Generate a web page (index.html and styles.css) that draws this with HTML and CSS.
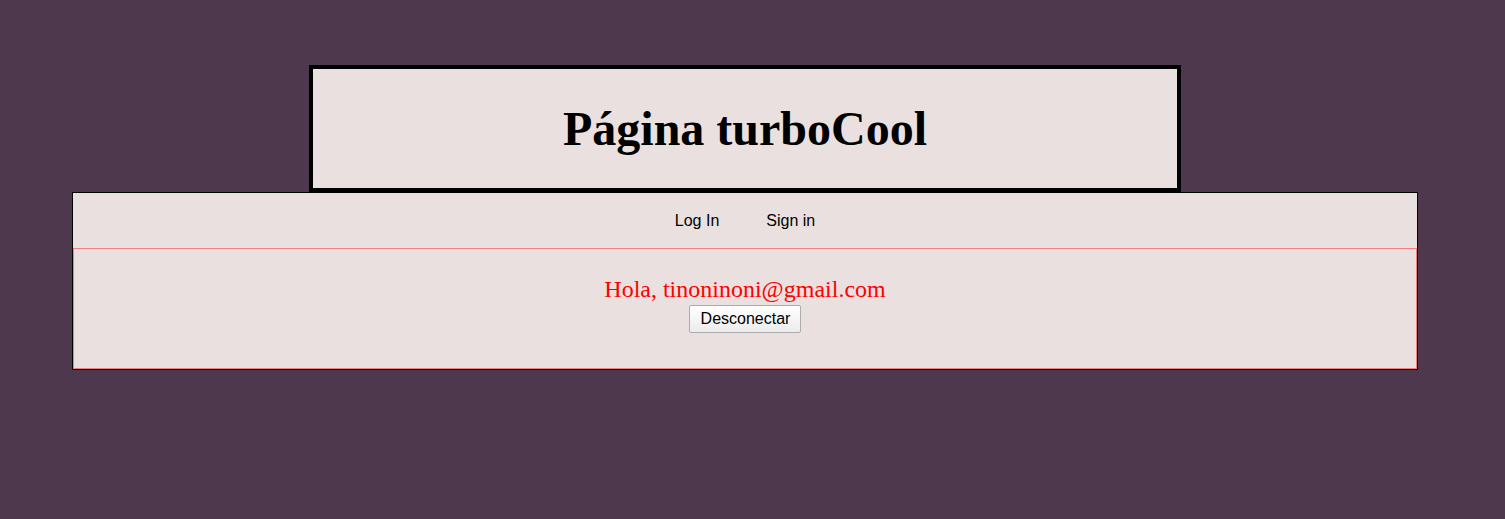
FILE: index.html
```html
<!DOCTYPE html>
<html lang="es">
<head>
<meta charset="utf-8">
<title>Página turboCool</title>
<link rel="stylesheet" href="styles.css">
</head>
<body>
<div class="page">
  <header class="banner">
    <h1 class="title">Página turboCool</h1>
  </header>
  <div class="panel">
    <nav class="nav">
      <a class="nav-link" href="#">Log In</a>
      <a class="nav-link" href="#">Sign in</a>
    </nav>
    <section class="session">
      <p class="greeting">Hola, tinoninoni@gmail.com</p>
      <button class="logout" type="button">Desconectar</button>
    </section>
  </div>
</div>
</body>
</html>
```

FILE: styles.css
```css
html, body {
  margin: 0;
  padding: 0;
  background: #4e384d;
  height: 100%;
}

.page {
  width: 1490px;
  display: flex;
  flex-direction: column;
  align-items: center;
  padding-top: 65px;
}

.banner {
  box-sizing: border-box;
  width: 872px;
  border: 4px solid #000;
  background: #eae0e0;
  padding: 32px 0;
}

.title {
  margin: 0;
  text-align: center;
  font-family: "Liberation Serif", "Times New Roman", serif;
  font-weight: bold;
  font-size: 48px;
  line-height: 55px;
  color: #000;
}

.panel {
  box-sizing: border-box;
  width: 1346px;
  border: 1px solid #000;
  background: #eae0e0;
}

.nav {
  display: flex;
  justify-content: center;
  gap: 47px;
  height: 55px;
  align-items: center;
}

.nav-link {
  font-family: "Liberation Sans", Arial, sans-serif;
  font-size: 16px;
  color: #000;
  text-decoration: none;
  padding-top: 1px;
}

.session {
  border: 1px solid #f08080;
  display: flex;
  flex-direction: column;
  align-items: center;
  padding: 26px 0 35px;
}

.greeting {
  margin: 0;
  font-family: "Liberation Serif", "Times New Roman", serif;
  font-size: 24px;
  line-height: 28px;
  color: #ff0000;
}

.logout {
  margin-top: 2px;
  font-family: "Liberation Sans", Arial, sans-serif;
  font-size: 16px;
  line-height: 18px;
  padding: 4px 10px 4px 11px;
  color: #000;
  background: linear-gradient(#ffffff, #ececec);
  border: 1px solid #acacac;
  border-radius: 2px;
}
```
